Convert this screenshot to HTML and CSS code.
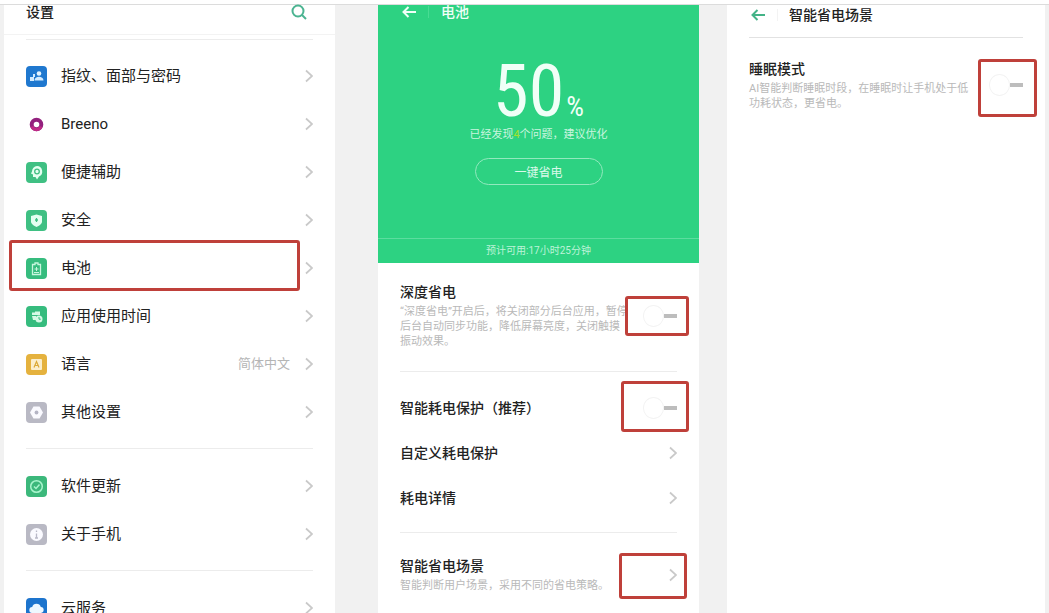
FILE: index.html
```html
<!DOCTYPE html>
<html lang="zh-CN">
<head>
    <meta charset="UTF-8">
    <meta name="viewport" content="width=device-width, initial-scale=1.0">
    <title>智能省电设置</title>
    <link rel="stylesheet" href="styles.css">
</head>
<body>
    <svg class="defs" aria-hidden="true">
        <symbol id="chevron" viewBox="0 0 8 14">
            <path d="M1 1.5 7 7 1 12.5" fill="none" stroke="#c9c9c9" stroke-width="1.7"/>
        </symbol>
        <symbol id="back" viewBox="0 0 14 12">
            <path d="M6.5 1 1.5 6l5 5M1.5 6H14" fill="none" stroke="currentColor" stroke-width="2"/>
        </symbol>
    </svg>

    <main class="screens">

        <!-- Screen 1: Settings -->
        <section class="phone settings">
            <header class="bar">
                <h1>设置</h1>
                <button type="button" class="search" aria-label="搜索">
                    <svg width="16" height="16" viewBox="0 0 16 16"><circle cx="7" cy="7" r="5.5" fill="none" stroke="#4bb491" stroke-width="2"/><path d="M11 11l4 4" stroke="#4bb491" stroke-width="2"/></svg>
                </button>
            </header>
            <nav class="list">
                <hr class="divider first">
                <a href="#" class="row">
                    <svg class="icon" viewBox="0 0 21 21"><rect width="21" height="21" rx="4" fill="#1f78cf"/><circle cx="13" cy="7.5" r="2.3" fill="#e2f3ff"/><path d="M8.500 14.500c0-5 9-5 9 0zM4 11h4v4H4zM7 8h2v3H7z" fill="#d2ebff"/></svg>
                    <span class="label">指纹、面部与密码</span>
                    <svg class="chevron"><use href="#chevron"/></svg>
                </a>
                <a href="#" class="row">
                    <svg class="icon" viewBox="0 0 21 21"><circle cx="10.500" cy="10.500" r="4.800" fill="#fff" stroke="#93217e" stroke-width="4"/><path d="M6 12.500a4.800 4.800 0 0 0 9 0" fill="none" stroke="#c02a86" stroke-width="3"/></svg>
                    <span class="label">Breeno</span>
                    <svg class="chevron"><use href="#chevron"/></svg>
                </a>
                <a href="#" class="row">
                    <svg class="icon" viewBox="0 0 21 21"><rect width="21" height="21" rx="4" fill="#3fc083"/><path d="M11 4a5.500 5.500 0 0 1 2 10.500l-2 3-1.500-2.500H7v-2.500L5 11.500l1-2A5.500 5.500 0 0 1 11 4z" fill="#e4fff1"/><circle cx="11" cy="9.500" r="2.300" fill="none" stroke="#3fc083" stroke-width="1.300"/></svg>
                    <span class="label">便捷辅助</span>
                    <svg class="chevron"><use href="#chevron"/></svg>
                </a>
                <a href="#" class="row">
                    <svg class="icon" viewBox="0 0 21 21"><rect width="21" height="21" rx="4" fill="#3fc083"/><path d="M10.500 4.500 16 6v5.500c0 2.500-3 4.500-5.500 5.500C8 16 5 14 5 11.500V6z" fill="#e4fff1"/><path d="M10.500 8v4M9 10h3" stroke="#3fc083" stroke-width="1.300"/></svg>
                    <span class="label">安全</span>
                    <svg class="chevron"><use href="#chevron"/></svg>
                </a>
                <a href="#" class="row mark mark-row">
                    <svg class="icon" viewBox="0 0 21 21"><rect width="21" height="21" rx="4" fill="#36bc7e"/><path d="M9 5h3v1.500h2.500v10h-8v-10H9z" fill="none" stroke="#c8f7de" stroke-width="1.300"/><path d="M10.500 9v4M8.500 11h4M8 14.500h5" stroke="#c8f7de"/></svg>
                    <span class="label">电池</span>
                    <svg class="chevron"><use href="#chevron"/></svg>
                </a>
                <a href="#" class="row">
                    <svg class="icon" viewBox="0 0 21 21"><rect width="21" height="21" rx="4" fill="#36bc7e"/><path d="M6 9V6.500h3V5.500h5V9zM6 10h4v4H7z" fill="#d5f9e6"/><circle cx="13" cy="13" r="3.500" fill="#d5f9e6"/><path d="M13 11v2.200h1.800" fill="none" stroke="#36bc7e"/></svg>
                    <span class="label">应用使用时间</span>
                    <svg class="chevron"><use href="#chevron"/></svg>
                </a>
                <a href="#" class="row">
                    <svg class="icon" viewBox="0 0 21 21"><rect width="21" height="21" rx="4" fill="#e5b23e"/><rect x="5" y="5" width="11" height="11" rx="1" fill="#fbeecb"/><path d="M8 13.500l2.500-6 2.500 6M9 11.500h3" fill="none" stroke="#dba936" stroke-width="1.200"/></svg>
                    <span class="label">语言</span>
                    <span class="value">简体中文</span>
                    <svg class="chevron"><use href="#chevron"/></svg>
                </a>
                <a href="#" class="row">
                    <svg class="icon" viewBox="0 0 21 21"><rect width="21" height="21" rx="4" fill="#b9b9c4"/><path d="M7.500 4.500h6l3.500 6-3.500 6h-6L4 10.500z" fill="#fafaff"/><circle cx="10.500" cy="10.500" r="1.900" fill="#b4b4c4"/></svg>
                    <span class="label">其他设置</span>
                    <svg class="chevron"><use href="#chevron"/></svg>
                </a>
                <hr class="divider">
                <a href="#" class="row">
                    <svg class="icon" viewBox="0 0 21 21"><rect width="21" height="21" rx="4" fill="#3cb87b"/><circle cx="10.500" cy="10.500" r="5.800" fill="none" stroke="#a9f5cd" stroke-width="1.500"/><path d="M8 10.500l2 2 3.500-4" fill="none" stroke="#a9f5cd" stroke-width="1.500"/></svg>
                    <span class="label">软件更新</span>
                    <svg class="chevron"><use href="#chevron"/></svg>
                </a>
                <a href="#" class="row">
                    <svg class="icon" viewBox="0 0 21 21"><rect width="21" height="21" rx="4" fill="#b9b9c4"/><circle cx="10.500" cy="10.500" r="6.500" fill="#fafaff"/><path d="M10.500 6.500v1.500M10.500 9.500v5M9 14h3" stroke="#b9b9c8" stroke-width="1.300"/></svg>
                    <span class="label">关于手机</span>
                    <svg class="chevron"><use href="#chevron"/></svg>
                </a>
                <hr class="divider">
                <a href="#" class="row">
                    <svg class="icon" viewBox="0 0 21 21"><rect width="21" height="21" rx="4" fill="#1d74cd"/><path d="M6.500 15a3 3 0 0 1-.3-6 4.500 4.500 0 0 1 8.600 0 3 3 0 0 1-.3 6z" fill="#eef8ff"/></svg>
                    <span class="label">云服务</span>
                    <svg class="chevron"><use href="#chevron"/></svg>
                </a>
            </nav>
        </section>

        <!-- Screen 2: Battery -->
        <section class="phone battery">
            <div class="hero">
                <header class="bar">
                    <button type="button" class="back" aria-label="返回"><svg><use href="#back"/></svg></button>
                    <h1>电池</h1>
                </header>
                <p class="level">50<span>%</span></p>
                <p class="status">已经发现<em>4</em>个问题，建议优化</p>
                <button type="button" class="save">一键省电</button>
                <p class="remaining">预计可用:17小时25分钟</p>
            </div>
            <div class="list">
                <div class="item">
                    <div class="text">
                        <label for="deep">深度省电</label>
                        <p>“深度省电”开启后，将关闭部分后台应用，暂停<br>后台自动同步功能，降低屏幕亮度，关闭触摸<br>振动效果。</p>
                    </div>
                    <span class="mark mark-deep"><input type="checkbox" id="deep" class="switch"></span>
                </div>
                <hr class="divider">
                <div class="row">
                    <label for="guard" class="label">智能耗电保护（推荐）</label>
                    <span class="mark mark-guard"><input type="checkbox" id="guard" class="switch"></span>
                </div>
                <a href="#" class="row">
                    <span class="label">自定义耗电保护</span>
                    <svg class="chevron"><use href="#chevron"/></svg>
                </a>
                <a href="#" class="row">
                    <span class="label">耗电详情</span>
                    <svg class="chevron"><use href="#chevron"/></svg>
                </a>
                <hr class="divider">
                <a href="#" class="item">
                    <div class="text">
                        <h2>智能省电场景</h2>
                        <p>智能判断用户场景，采用不同的省电策略。</p>
                    </div>
                    <span class="mark mark-scene"><svg class="chevron"><use href="#chevron"/></svg></span>
                </a>
            </div>
        </section>

        <!-- Screen 3: Power saving scenes -->
        <section class="phone scene">
            <header class="bar">
                <button type="button" class="back" aria-label="返回"><svg><use href="#back"/></svg></button>
                <h1>智能省电场景</h1>
            </header>
            <div class="list">
                <hr class="divider">
                <div class="item">
                    <div class="text">
                        <label for="sleep">睡眠模式</label>
                        <p>AI智能判断睡眠时段，在睡眠时让手机处于低<br>功耗状态，更省电。</p>
                    </div>
                    <span class="mark mark-sleep"><input type="checkbox" id="sleep" class="switch"></span>
                </div>
            </div>
        </section>

    </main>
</body>
</html>
```

FILE: styles.css
```css
* {
    box-sizing: border-box;
}
body {
    margin: 0;
    padding-top: 4px;
    height: 100vh;
    overflow: hidden;
    background: #fff;
    color: #222;
    font-family: Roboto, "Noto Sans CJK SC", sans-serif;
    font-size: 14px;
}
h1, h2, p {
    margin: 0;
    font-weight: 400;
}
a {
    color: inherit;
    text-decoration: none;
}
button {
    padding: 0;
    border: none;
    background: none;
    color: inherit;
    font-family: inherit;
    cursor: pointer;
}
.defs {
    display: none;
}

/* Three phones side by side */
.screens {
    display: grid;
    grid-template-columns: 331fr 336fr 318fr;
    gap: 28px;
    height: 100%;
    padding: 0 4px;
    border-top: 1px solid #dcdcdc;
    background: #f1f1f1;
}
.phone {
    background: #fff;
}
.battery {
    margin-left: 15px;
}
.list {
    padding: 0 22px;
}

/* Title bars */
.bar {
    display: flex;
    align-items: center;
    height: 14px;
    padding: 0 22px;
}
.bar h1 {
    font-size: 14px;
    font-weight: 500;
    line-height: 20px;
}
.settings .bar {
    justify-content: space-between;
    height: 30px;
    padding: 0 28px 15px 22px;
    border-bottom: 1px solid #f3f3f3;
}
.scene .bar {
    height: 20px;
}
.search, .search svg, .back svg {
    display: block;
}
.back {
    padding: 0 12px 0 2px;
    border-right: 1px solid #48dc93;
}
.back svg {
    width: 14px;
    height: 12px;
}
.back + h1 {
    margin-left: 12px;
}
.scene .back {
    border-color: #f3f3f3;
    color: #43b387;
}
.scene .back + h1 {
    margin-left: 11px;
}

/* Rows */
.divider {
    height: 1px;
    margin: 12px 0 13px;
    border: none;
    background: #ececec;
}
.divider.first {
    margin: 4px 0 12px;
}
.scene .divider {
    margin-bottom: 11px;
    background: #e2e2e2;
}
.row {
    display: flex;
    align-items: center;
    height: 45px;
    line-height: 20px;
}
.settings .row {
    height: 48px;
    font-size: 15px;
}
.icon {
    flex: none;
    width: 21px;
    height: 21px;
    margin-right: 14px;
}
.label {
    flex: 1;
    font-weight: 500;
}
.settings .label {
    font-weight: 400;
}
.value {
    margin-right: 15px;
    color: #b5b5b5;
    font-size: 13px;
}
.chevron {
    flex: none;
    width: 8px;
    height: 14px;
}
.item {
    display: flex;
    align-items: center;
    justify-content: space-between;
    padding: 10px 0;
}
.text {
    white-space: nowrap;
}
.text label, .text h2 {
    display: block;
    margin-bottom: 2px;
    font-size: 14px;
    font-weight: 500;
    line-height: 20px;
}
.text p {
    color: #b9b9b9;
    font-size: 11px;
    line-height: 15px;
}

/* Green battery panel */
.hero {
    background: #2dd282;
    color: #f0fff7;
    text-align: center;
}
.hero + .list {
    padding-top: 9px;
}
.level {
    height: 56px;
    margin-top: 45px;
    font-family: "Roboto Condensed", "Open Sans Condensed", Roboto, sans-serif;
    font-size: 72px;
    line-height: 56px;
}
.level span {
    margin-left: 2px;
    font-size: 28px;
    line-height: 28px;
}
.status {
    margin-top: 7px;
    color: #c9f5df;
    font-size: 11px;
    line-height: 16px;
}
.status em {
    color: #a5e02c;
    font-style: normal;
}
.save {
    display: block;
    width: 128px;
    height: 27px;
    margin: 15px auto 0;
    border: 1px solid #92e9be;
    border-radius: 14px;
    color: #d9f9e9;
    font-size: 12px;
}
.remaining {
    margin-top: 53px;
    border-top: 1px solid #5bdd9f;
    color: #bdf3d8;
    font-size: 10px;
    line-height: 24px;
}

/* Switches */
.switch {
    display: flex;
    align-items: center;
    width: 34px;
    height: 20px;
    margin: 0;
    appearance: none;
    cursor: pointer;
}
.switch::before {
    content: "";
    width: 20px;
    height: 20px;
    border: 1px solid #f3f3f3;
    border-radius: 50%;
}
.switch::after {
    content: "";
    width: 13px;
    height: 4px;
    background: #bdbdbd;
}

/* Red highlight frames */
.mark {
    position: relative;
}
span.mark {
    display: flex;
    align-items: center;
    justify-content: flex-end;
    flex: none;
    width: 34px;
    height: 20px;
}
.mark::after {
    content: "";
    position: absolute;
    border: 3px solid #bf403a;
    border-radius: 3px;
    pointer-events: none;
}
.mark-row::after {
    inset: -4px 13px 1px -17px;
}
.mark-deep::after {
    inset: -10px -12px -10px -18px;
}
.mark-guard::after {
    inset: -17px -12px -14px -22px;
}
.mark-scene::after {
    inset: -12px -10px -14px -24px;
}
.mark-sleep::after {
    inset: -16px -14px -22px -11px;
}
```
